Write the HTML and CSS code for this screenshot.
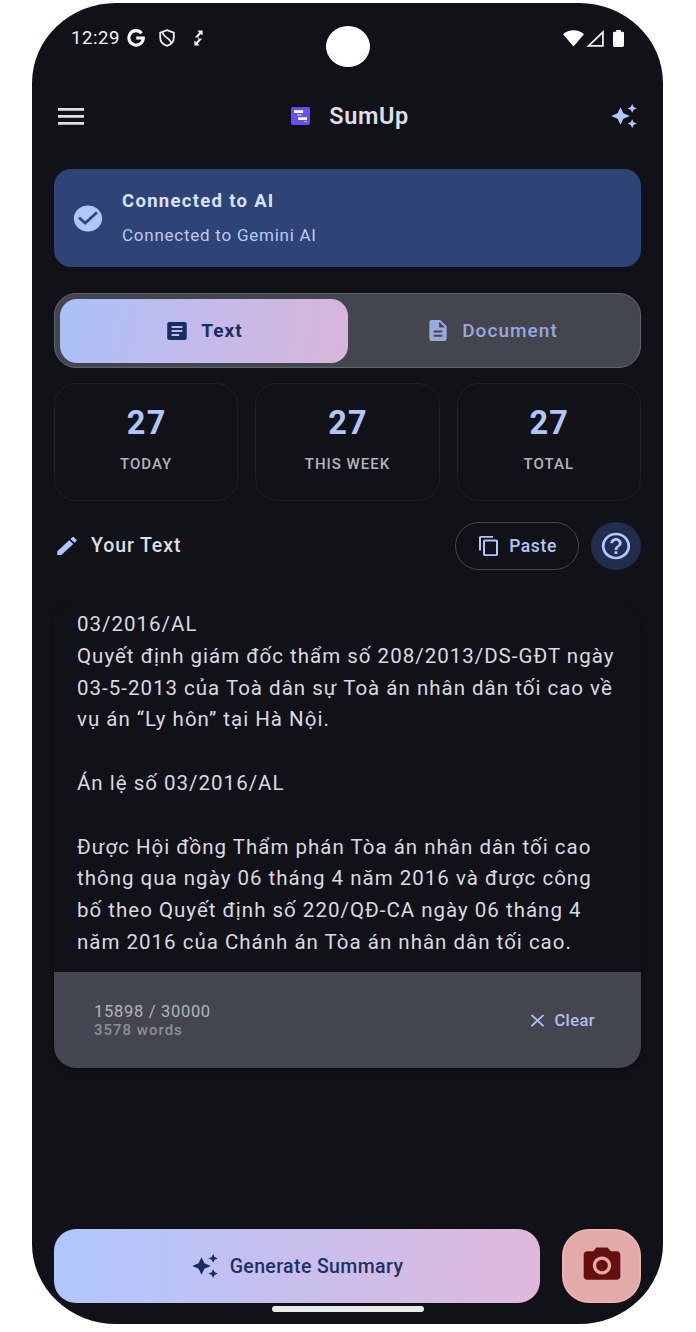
FILE: index.html
```html
<!DOCTYPE html>
<html lang="vi">
<head>
<meta charset="utf-8">
<title>SumUp</title>
<link rel="stylesheet" href="styles.css">
</head>
<body>
<svg width="0" height="0" class="defs">
  <symbol id="sparkle" viewBox="0 0 24 24" preserveAspectRatio="none"><path d="M19 9l1.25-2.75L23 5l-2.75-1.25L19 1l-1.25 2.75L15 5l2.75 1.25zM11.5 9.5L9 4 6.5 9.5 1 12l5.5 2.5L9 20l2.5-5.5L17 12zM19 15l-1.25 2.75L15 19l2.75 1.25L19 23l1.25-2.75L23 19l-2.75-1.25z"/></symbol>
</svg>
<div class="phone">
  <div class="camera-hole"></div>
  <header class="status">
    <span class="clock">12:29</span>
    <svg class="st-g" width="18" height="18" viewBox="0 0 18 18"><path d="M14.6 4.2A7.2 7.2 0 1 0 16.3 9H9.2" fill="none" stroke="#fff" stroke-width="3.1"/></svg>
    <svg class="st-shield" width="16" height="18" viewBox="0 0 16 18" fill="none" stroke="#eee" stroke-width="1.8"><path d="M8 1.2L14.8 3.6V8.5C14.8 12.4 12 15.6 8 16.9 4 15.6 1.2 12.4 1.2 8.5V3.6z"/><path d="M3.6 3.2C4 8.2 11.5 9 12.2 14.2"/></svg>
    <svg class="st-sync" width="9" height="16" viewBox="0 0 9 16"><path d="M3.4 .6H8.600V5.600L6.900 4L4.400 6.600 5.300 7.500 3.400 7.500 .9 7.200 5.200 2.400zM5.600 15.400H.4V10.400L2.100 12 4.600 9.400 3.700 8.500 5.600 8.500 8.100 8.800 3.800 13.600z" fill="#eee"/></svg>
    <svg class="st-wifi" width="21" height="17" viewBox="0 0 21 17"><path d="M10.5 16.6L0 4.2C5.6-1.2 15.4-1.2 21 4.2z" fill="#fff"/></svg>
    <svg class="st-signal" width="18" height="17" viewBox="0 0 18 17"><path d="M16.9 2.2V15.8H2.6z" fill="none" stroke="#eee" stroke-width="1.8"/></svg>
    <svg class="st-battery" width="11" height="17" viewBox="0 0 11 18" preserveAspectRatio="none"><path d="M3.2 0H7.8V1.9H9.6Q11 1.9 11 3.3V16.5Q11 18 9.6 18H1.4Q0 18 0 16.5V3.3Q0 1.9 1.4 1.9H3.2z" fill="#fff"/></svg>
  </header>

  <nav class="appbar">
    <svg class="menu" width="26" height="17" viewBox="0 0 26 17" fill="#dfdfe6"><path d="M0 0H26V2.8H0zM0 7H26V9.8H0zM0 14H26V16.8H0z"/></svg>
    <div class="brand">
      <svg width="19" height="18" viewBox="0 0 19 18"><rect width="19" height="18" rx="2" fill="#6a4cf5"/><path d="M3 3.2H12.2V6H3zM7 10.2H16V13H7z" fill="#fff"/><path d="M6 7.2H10.5V8.8H6zM13 14H16V15H13z" fill="#b9acfb"/></svg>
      <span class="title">SumUp</span>
    </div>
    <svg class="ico-accent" width="28" height="26"><use href="#sparkle"/></svg>
  </nav>

  <main>
    <section class="banner">
      <svg width="34" height="31" viewBox="0 0 24 24" preserveAspectRatio="none" class="ico-accent"><path d="M12 2C6.48 2 2 6.48 2 12s4.480 10 10 10 10-4.480 10-10S17.520 2 12 2zm-2 15l-5-5 1.410-1.410L10 14.170l7.590-7.590L19 8l-9 9z"/></svg>
      <div class="banner-text">
        <div class="banner-title">Connected to AI</div>
        <div class="banner-sub">Connected to Gemini AI</div>
      </div>
    </section>

    <section class="tabs">
      <div class="tab active">
        <svg width="26" height="24" viewBox="0 0 24 24" preserveAspectRatio="none"><path d="M19 3H5c-1.100 0-2 .9-2 2v14c0 1.100.9 2 2 2h14c1.100 0 2-.9 2-2V5c0-1.100-.9-2-2-2zm-5 14H7v-2h7v2zm3-4H7v-2h10v2zm0-4H7V7h10v2z"/></svg>
        <span class="tab-text">Text</span>
      </div>
      <div class="tab">
        <svg width="26" height="25" viewBox="0 0 24 24" preserveAspectRatio="none"><path d="M14 2H6c-1.100 0-1.990.9-1.990 2L4 20c0 1.100.890 2 1.990 2H18c1.100 0 2-.9 2-2V8l-6-6zm2 16H8v-2h8v2zm0-4H8v-2h8v2zm-3-5V3.500L18.500 9H13z"/></svg>
        <span class="tab-doc">Document</span>
      </div>
    </section>

    <section class="stats">
      <div class="stat"><b>27</b><span>TODAY</span></div>
      <div class="stat"><b>27</b><span>THIS WEEK</span></div>
      <div class="stat"><b>27</b><span>TOTAL</span></div>
    </section>

    <section class="heading">
      <svg width="26" height="24" viewBox="0 0 24 24" preserveAspectRatio="none" class="ico-accent"><path d="M3 17.250V21h3.750L17.810 9.940l-3.750-3.750L3 17.250zM20.710 7.040c.390-.390.390-1.020 0-1.410l-2.340-2.340c-.390-.390-1.020-.390-1.410 0l-1.830 1.830 3.750 3.750 1.830-1.830z"/></svg>
      <h2>Your Text</h2>
      <div class="paste">
        <svg width="24" height="22" viewBox="0 0 24 24" preserveAspectRatio="none" class="ico-accent"><path d="M16 1H4c-1.100 0-2 .9-2 2v14h2V3h12V1zm3 4H8c-1.100 0-2 .9-2 2v14c0 1.100.9 2 2 2h11c1.100 0 2-.9 2-2V7c0-1.100-.9-2-2-2zm0 16H8V7h11v14z"/></svg>
        <span>Paste</span>
      </div>
      <div class="help">
        <svg width="34" height="32" viewBox="0 0 24 24" preserveAspectRatio="none" class="ico-accent"><path d="M11 18h2v-2h-2v2zm1-16C6.480 2 2 6.480 2 12s4.480 10 10 10 10-4.480 10-10S17.520 2 12 2zm0 18c-4.410 0-8-3.590-8-8s3.590-8 8-8 8 3.590 8 8-3.590 8-8 8zm0-14c-2.210 0-4 1.790-4 4h2c0-1.100.9-2 2-2s2 .9 2 2c0 2-3 1.750-3 5h2c0-2.250 3-2.500 3-5 0-2.210-1.790-4-4-4z"/></svg>
      </div>
    </section>

    <section class="editor">
      <div class="editor-text">
        <p>03/2016/AL</p>
        <p>Quyết định giám đốc thẩm số 208/2013/DS-GĐT ngày</p>
        <p>03-5-2013 của Toà dân sự Toà án nhân dân tối cao về</p>
        <p>vụ án “Ly hôn” tại Hà Nội.</p>
        <p>&nbsp;</p>
        <p>Án lệ số 03/2016/AL</p>
        <p>&nbsp;</p>
        <p>Được Hội đồng Thẩm phán Tòa án nhân dân tối cao</p>
        <p>thông qua ngày 06 tháng 4 năm 2016 và được công</p>
        <p>bố theo Quyết định số 220/QĐ-CA ngày 06 tháng 4</p>
        <p>năm 2016 của Chánh án Tòa án nhân dân tối cao.</p>
      </div>
      <div class="editor-foot">
        <div class="counts">
          <div class="chars">15898 / 30000</div>
          <div class="words">3578 words</div>
        </div>
        <div class="clear">
          <svg width="23" height="21" viewBox="0 0 24 24" preserveAspectRatio="none"><path d="M19 6.410L17.590 5 12 10.590 6.410 5 5 6.410 10.590 12 5 17.590 6.410 19 12 13.410 17.590 19 19 17.590 13.410 12z"/></svg>
          <span>Clear</span>
        </div>
      </div>
    </section>
  </main>

  <footer class="actions">
    <div class="generate">
      <svg width="28" height="26"><use href="#sparkle"/></svg>
      <span>Generate Summary</span>
    </div>
    <div class="snap">
      <svg width="44" height="43" viewBox="0 0 24 24" preserveAspectRatio="none"><circle cx="12" cy="12" r="3.200"/><path d="M9 2L7.170 4H4c-1.100 0-2 .9-2 2v12c0 1.100.9 2 2 2h16c1.100 0 2-.9 2-2V6c0-1.100-.9-2-2-2h-3.170L15 2H9zm3 15c-2.760 0-5-2.240-5-5s2.240-5 5-5 5 2.240 5 5-2.240 5-5 5z"/></svg>
    </div>
  </footer>
  <div class="home-bar"></div>
</div>
</body>
</html>
```
FILE: styles.css
```css
* { box-sizing: border-box; }
body { margin: 0; background: #fff; font-family: Roboto, "Noto Sans", sans-serif; }
.defs { display: block; }
svg { display: block; flex: none; }
p, h2 { margin: 0; white-space: nowrap; }
span { white-space: nowrap; }
.ico-accent { fill: #b1c6ff; }

.phone {
  position: relative;
  display: flex;
  flex-direction: column;
  width: 631px;
  height: 1321px;
  margin: 3px 0 0 32px;
  padding: 0 22px;
  border-radius: 84px / 80px;
  background: #111217;
  overflow: hidden;
}
.camera-hole {
  position: absolute;
  left: 294px;
  top: 23px;
  width: 44px;
  height: 41px;
  border-radius: 50%;
  background: #fff;
}

.status { display: flex; align-items: center; height: 70px; padding: 0 17px 0 17px; color: #f4f4f4; }
.clock { width: 50px; font-size: 18.500px; letter-spacing: .6px; }
.st-g { margin-left: 6px; }
.st-shield { margin-left: 14px; }
.st-sync { margin-left: 19px; }
.st-wifi { margin-left: auto; }
.st-signal { margin-left: 2px; }
.st-battery { margin-left: 9px; }

.appbar { display: flex; align-items: center; justify-content: space-between; height: 86px; padding: 0 3px 0 4px; }
.brand { display: flex; align-items: center; gap: 19px; margin-left: 6px; }
.title { font-size: 23.500px; font-weight: 600; letter-spacing: .6px; color: #dfdfe5; }

main { margin-top: 10px; }
.banner { display: flex; align-items: center; gap: 17px; height: 98px; padding: 0 17px; border-radius: 17px; background: #2e4477; }
.banner-title { font-size: 18.500px; font-weight: 700; line-height: 24px; letter-spacing: 1.300px; color: #d9e2ff; }
.banner-sub { margin-top: 10px; font-size: 17px; line-height: 24px; letter-spacing: .75px; color: #bccaf2; }

.tabs { display: flex; height: 75px; margin-top: 26px; padding: 4.500px; border: 1.500px solid #60636d; border-radius: 22px; background: #43464f; }
.tab { display: flex; flex: 1; align-items: center; justify-content: center; gap: 11px; border-radius: 17px; font-size: 19px; font-weight: 500; letter-spacing: 1.050px; color: #9aa8dc; fill: #9aa8dc; }
.tab.active { color: #172e60; fill: #172e60; font-weight: 700; background: linear-gradient(100deg, #aac0f8, #c4baea 50%, #d7b6d8); }

.stats { display: grid; grid-template-columns: repeat(3, 1fr); gap: 17px; margin-top: 15px; }
.stat { display: flex; flex-direction: column; align-items: center; height: 118px; padding-top: 20px; border: 1.500px solid #1f2025; border-radius: 22px; }
.stat b { margin-left: 1px; font-size: 32.500px; line-height: 38px; letter-spacing: 1.200px; color: #b1c6ff; }
.stat span { margin-top: 12px; font-size: 15px; font-weight: 500; line-height: 20px; letter-spacing: 1px; color: #b4b5bb; }

.heading { display: flex; align-items: center; height: 48px; margin-top: 21px; }
h2 { margin-left: 11px; margin-bottom: 1px; font-size: 19.500px; font-weight: 500; letter-spacing: .9px; color: #dedfe5; }
.paste { display: flex; align-items: center; justify-content: center; gap: 8px; width: 124px; height: 48px; margin-left: auto; border: 1.500px solid #44464d; border-radius: 24px; font-size: 17.500px; font-weight: 500; letter-spacing: .6px; color: #b1c6ff; }
.help { display: flex; align-items: center; justify-content: center; width: 50px; height: 48px; margin-left: 12px; border-radius: 50%; background: #202d4c; }

.editor { margin-top: 35px; border-radius: 22px; overflow: hidden; box-shadow: 0 2px 4px #0c0d11; }
.editor-text { height: 367px; padding: 4px 0 0 23px; font-size: 20.500px; line-height: 31.800px; letter-spacing: 1px; color: #d9dae0; }
.editor-foot { display: flex; align-items: center; justify-content: space-between; height: 96px; padding: 0 46px 0 40px; background: #44464f; }
.counts { margin-top: 2px; }
.chars { font-size: 16.500px; line-height: 18px; letter-spacing: .7px; color: #b2b4be; }
.words { font-size: 15px; font-weight: 500; line-height: 18px; letter-spacing: 1px; color: #8b8e98; }
.clear { display: flex; align-items: center; gap: 5px; font-size: 16.500px; font-weight: 500; letter-spacing: .4px; color: #aebfef; fill: #aebfef; }

.actions { display: flex; gap: 22px; margin-top: auto; margin-bottom: 21px; }
.generate { display: flex; flex: 1; align-items: center; justify-content: center; gap: 11px; height: 74px; border-radius: 22px; background: linear-gradient(90deg, #afc6ff, #e0b8db); font-size: 19.500px; font-weight: 500; letter-spacing: .38px; color: #1d3263; fill: #172e60; }
.snap { display: flex; align-items: center; justify-content: center; width: 79px; height: 74px; padding-bottom: 2px; border: 2px solid #eeb2ae; border-radius: 27px; background: #e2aaa8; fill: #64110d; }
.home-bar { position: absolute; left: 240px; top: 1302.500px; width: 152px; height: 6px; border-radius: 3px; background: #e9ebea; }
```
